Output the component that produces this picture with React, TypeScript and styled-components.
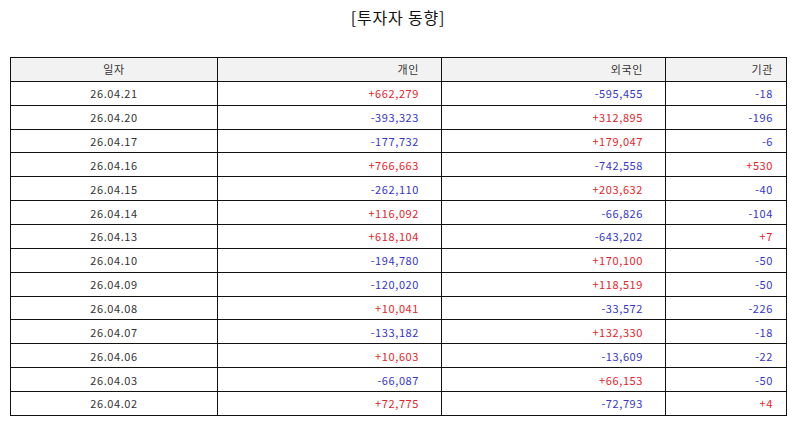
import React from "react";
import styled, { createGlobalStyle } from "styled-components";

const GlobalStyle = createGlobalStyle`
  html, body {
    margin: 0;
    padding: 0;
    background: #fff;
  }
  body {
    font-family: "Noto Sans CJK KR", "Noto Sans", sans-serif;
  }
`;

const Page = styled.div`
  width: 794px;
  height: 425px;
  padding: 0 8px 0 10px;
  box-sizing: border-box;
  display: flex;
  flex-direction: column;
  align-items: stretch;
`;

const Title = styled.h1`
  margin: 5px 0 0;
  height: 52px;
  text-align: center;
  font-size: 16px;
  font-weight: 400;
  letter-spacing: 0.8px;
  color: #111;
  line-height: 24px;
`;

const Table = styled.table`
  width: 776px;
  border-collapse: collapse;
  table-layout: fixed;
  font-size: 11px;
  letter-spacing: 0.6px;
  color: #333;
`;

const Row = styled.tr`
  height: 23.87px;
`;

const HeadCell = styled.th<{ $align: "center" | "right"; $pad: number }>`
  border: 1px solid #111;
  background: #f2f2f2;
  font-weight: 400;
  padding: 0 ${(p) => p.$pad}px 0 0;
  text-align: ${(p) => p.$align};
  line-height: 16px;
`;

const Cell = styled.td<{ $align: "center" | "right"; $pad: number; $tone?: "up" | "down" }>`
  border: 1px solid #111;
  padding: 0 ${(p) => p.$pad}px 0 0;
  text-align: ${(p) => p.$align};
  line-height: 16px;
  color: ${(p) => (p.$tone === "up" ? "#e3242b" : p.$tone === "down" ? "#3535c8" : "#333")};
`;

const columns = [
  { label: "일자", width: 207, align: "center" as const, pad: 0 },
  { label: "개인", width: 224, align: "right" as const, pad: 22 },
  { label: "외국인", width: 224, align: "right" as const, pad: 22 },
  { label: "기관", width: 121, align: "right" as const, pad: 13 },
];

const rows: [string, string, string, string][] = [
  ["26.04.21", "+662,279", "-595,455", "-18"],
  ["26.04.20", "-393,323", "+312,895", "-196"],
  ["26.04.17", "-177,732", "+179,047", "-6"],
  ["26.04.16", "+766,663", "-742,558", "+530"],
  ["26.04.15", "-262,110", "+203,632", "-40"],
  ["26.04.14", "+116,092", "-66,826", "-104"],
  ["26.04.13", "+618,104", "-643,202", "+7"],
  ["26.04.10", "-194,780", "+170,100", "-50"],
  ["26.04.09", "-120,020", "+118,519", "-50"],
  ["26.04.08", "+10,041", "-33,572", "-226"],
  ["26.04.07", "-133,182", "+132,330", "-18"],
  ["26.04.06", "+10,603", "-13,609", "-22"],
  ["26.04.03", "-66,087", "+66,153", "-50"],
  ["26.04.02", "+72,775", "-72,793", "+4"],
];

const toneOf = (v: string) => (v.startsWith("+") ? "up" : v.startsWith("-") ? "down" : undefined);

function App() {
  return (
    <>
      <GlobalStyle />
      <Page>
        <Title>[투자자 동향]</Title>
        <Table>
          <colgroup>
            {columns.map((c) => (
              <col key={c.label} style={{ width: c.width }} />
            ))}
          </colgroup>
          <thead>
            <Row>
              {columns.map((c) => (
                <HeadCell key={c.label} $align={c.align} $pad={c.pad}>
                  {c.label}
                </HeadCell>
              ))}
            </Row>
          </thead>
          <tbody>
            {rows.map((r) => (
              <Row key={r[0]}>
                {r.map((v, i) => (
                  <Cell
                    key={i}
                    $align={columns[i].align}
                    $pad={columns[i].pad}
                    $tone={i === 0 ? undefined : toneOf(v)}
                  >
                    {v}
                  </Cell>
                ))}
              </Row>
            ))}
          </tbody>
        </Table>
      </Page>
    </>
  );
}

export default App;
